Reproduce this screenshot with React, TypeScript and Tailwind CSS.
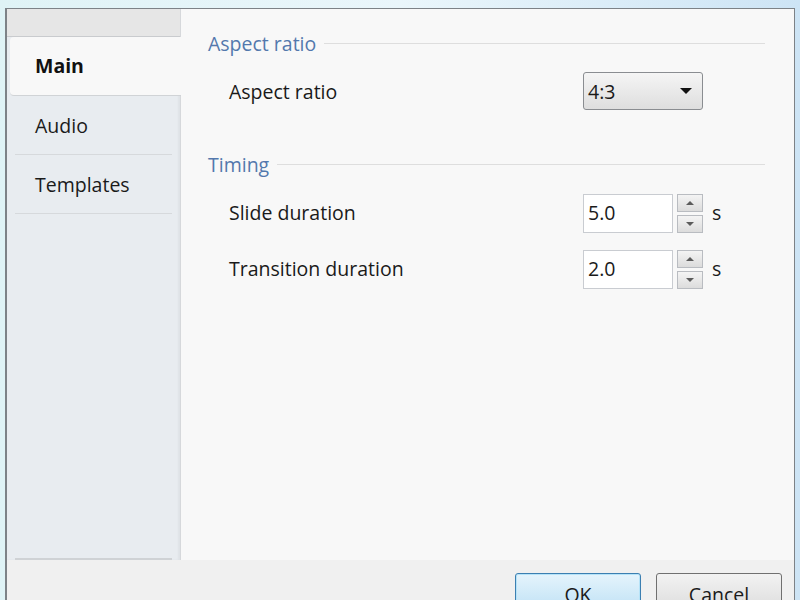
import { useState } from "react";

type Tab = "Main" | "Audio" | "Templates";

function Spin({ value }: { value: string }) {
  return (
    <div className="flex items-center">
      <div className="flex h-[39px] w-[90px] items-center border border-[#c9ccd1] bg-white pl-[4px] text-[#1a1a1a]">
        {value}
      </div>
      <div className="ml-[4px] flex flex-col gap-[3px]">
        <button className="flex h-[18px] w-[26px] items-center justify-center border border-[#b9bcc1] bg-gradient-to-b from-[#f4f4f4] to-[#dcdcdc]">
          <span className="h-0 w-0 border-x-[4px] border-b-[4px] border-x-transparent border-b-[#5b5b5b]" />
        </button>
        <button className="flex h-[18px] w-[26px] items-center justify-center border border-[#b9bcc1] bg-gradient-to-b from-[#f4f4f4] to-[#dcdcdc]">
          <span className="h-0 w-0 border-x-[4px] border-t-[4px] border-x-transparent border-t-[#5b5b5b]" />
        </button>
      </div>
      <span className="ml-[9px] text-[#1a1a1a]">s</span>
    </div>
  );
}

function Group({ title }: { title: string }) {
  return (
    <div className="flex items-center">
      <span className="text-[#5378ad]">{title}</span>
      <div className="ml-[8px] h-px flex-1 bg-[#dedede]" />
    </div>
  );
}

export default function App() {
  const [tab, setTab] = useState<Tab>("Main");
  const tabs: Tab[] = ["Main", "Audio", "Templates"];

  return (
    <div className="h-[600px] w-[800px] overflow-hidden bg-gradient-to-r from-[#dff3f6] via-[#eaf6fb] to-[#cde4f5] font-['Open_Sans',sans-serif] text-[19.5px]">
      <div className="h-[8px]" />
      <div className="mx-[5px] flex h-[592px] flex-col overflow-hidden border-l-[2px] border-r border-t border-[#7d8287] bg-[#f0f0f0]">
        <div className="flex h-[551px] shrink-0">
          <div className="flex w-[174px] flex-col border-r border-[#d6d8db] bg-[#e8ecf0] shadow-[inset_-2px_0_2px_rgba(0,0,0,0.04)]">
            <div className="h-[28px] border-b border-[#c9cbce] bg-[#e6e6e6]" />
            {tabs.map((t) => (
              <button
                key={t}
                onClick={() => setTab(t)}
                className={
                  t === tab
                    ? "-mr-px ml-[3px] flex h-[59px] items-center rounded-l-[4px] border-b border-[#d0d3d6] bg-[#f8f8f8] pl-[25px] text-left font-bold text-[#111]"
                    : "mx-[8px] flex h-[59px] items-center border-b border-[#d6d9dc] pl-[20px] pt-[2px] text-left text-[#1a1a1a]"
                }
              >
                {t}
              </button>
            ))}
            <div className="flex-1" />
            <div className="mx-[8px] h-[2px] bg-[#cfd2d5]" />
          </div>
          <div className="flex flex-1 flex-col bg-[#f8f8f8] pl-[27px] pr-[29px] pt-[20px]">
            <Group title="Aspect ratio" />
            <div className="mt-[14px] flex items-center justify-between pl-[21px] pr-[62px]">
              <span className="text-[#1a1a1a]">Aspect ratio</span>
              <div className="flex h-[38px] w-[120px] items-center justify-between rounded-[3px] border border-[#8a8d91] bg-gradient-to-b from-[#f5f5f5] to-[#dedede] pl-[4px] pr-[10px] text-[#1a1a1a]">
                4:3
                <span className="h-0 w-0 border-x-[6px] border-t-[6px] border-x-transparent border-t-[#111]" />
              </div>
            </div>
            <div className="mt-[40px]">
              <Group title="Timing" />
            </div>
            <div className="mt-[14px] flex flex-col gap-[17px] pl-[21px]">
              <div className="flex items-center">
                <span className="w-[354px] text-[#1a1a1a]">Slide duration</span>
                <Spin value="5.0" />
              </div>
              <div className="flex items-center">
                <span className="w-[354px] text-[#1a1a1a]">Transition duration</span>
                <Spin value="2.0" />
              </div>
            </div>
          </div>
        </div>
        <div className="flex flex-1 items-start justify-end gap-[15px] pr-[12px] pt-[13px]">
          <button className="h-[38px] w-[126px] shrink-0 rounded-[3px] border border-[#3c7fb1] bg-gradient-to-b from-[#e5f4fc] to-[#bfe1f5] pt-[6px] text-[#1a1a1a] shadow-[inset_0_0_0_1px_#b6e3f8]">
            OK
          </button>
          <button className="h-[38px] w-[126px] shrink-0 rounded-[3px] border border-[#707070] bg-gradient-to-b from-[#f2f2f2] to-[#dddddd] pt-[6px] text-[#1a1a1a]">
            Cancel
          </button>
        </div>
      </div>
    </div>
  );
}
